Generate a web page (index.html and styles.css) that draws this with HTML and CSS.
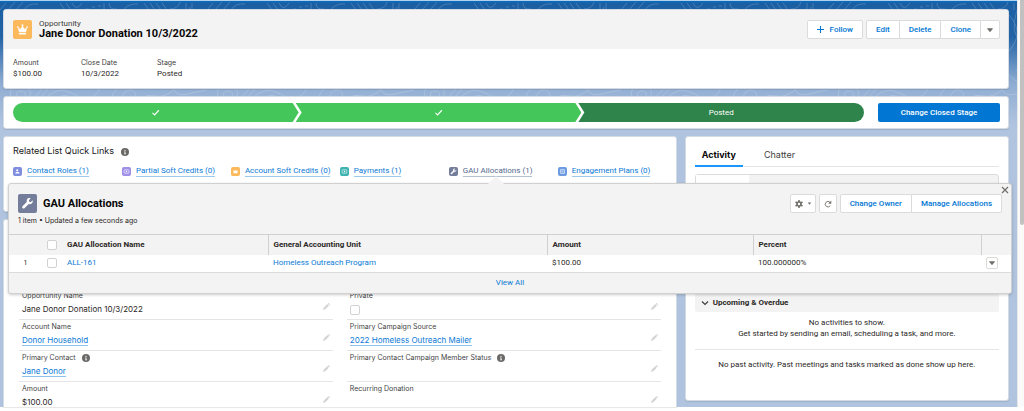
FILE: index.html
```html
<!DOCTYPE html>
<html lang="en">
<head>
    <meta charset="UTF-8">
    <meta name="viewport" content="width=device-width, initial-scale=1.0">
    <title>Jane Donor Donation 10/3/2022</title>
    <link rel="stylesheet" href="styles.css">
</head>
<body>
    <!-- shared icons -->
    <svg class="sprite" aria-hidden="true">
        <symbol id="info" viewBox="0 0 16 16">
            <circle cx="8" cy="8" r="8" fill="#6b6967"/>
            <circle cx="8" cy="4.6" r="1.3" fill="#fff"/>
            <path d="M6.3 7h2.6v4.2h1.2v1.3H6.2v-1.3h1.1V8.3h-1z" fill="#fff"/>
        </symbol>
        <symbol id="pencil" viewBox="0 0 16 16">
            <path d="M0 16l1.500-5L10 2.500l3.500 3.500L5 14.500zM11 1.500l1-1q.8-.7 1.600 0l1.900 1.900q.7.800 0 1.600l-1 1z" fill="#d6d4d2"/>
        </symbol>
        <symbol id="caret" viewBox="0 0 10 10">
            <path d="M.6 2h8.800q.8.300.3 1L5.600 8q-.6.6-1.200 0L.3 3q-.5-.7.3-1z" fill="#706e6b"/>
        </symbol>
        <symbol id="wrench" viewBox="0 0 24 24">
            <path d="M21.500 6.200l-3.300 3.200-3-.6-.6-3 3.200-3.300c-2.600-1-5.400-.2-6.700 2-1 1.600-1 3.200-.4 4.800L3.100 16.800c-1.200 1.200-1.200 2.800-.2 3.900 1.100 1 2.700 1 3.900-.2l7.500-7.600c1.700.6 3.400.5 4.900-.5 2.100-1.400 3.200-3.700 2.300-6.200z" fill="#fff"/>
        </symbol>
        <symbol id="tick" viewBox="0 0 12 12">
            <path d="M2 6.500l2.800 2.700L10.500 3" fill="none" stroke="#fff" stroke-width="1.500"/>
        </symbol>
        <symbol id="bill" viewBox="0 0 12 12">
            <rect x="2" y="3" width="8" height="6" rx="1" fill="none" stroke="#fff"/>
            <circle cx="6" cy="6" r="1.300" fill="#fff"/>
        </symbol>
    </svg>

    <div class="page">
        <main class="app">
            <svg class="topo" aria-hidden="true">
                <defs>
                    <pattern id="contours" width="207" height="130" patternUnits="userSpaceOnUse">
                        <g fill="none" stroke="#fff">
                            <path d="M0 9l6-7M8 9l7-8M16 9l7-8M24 9q4-7 14-6M60 2l5 7M66 2l5 7M72 2q4 9 10 0M86 8h3m3-2h3m3-1h3M104 2v7M109 2q0 7 8 6M124 8q6-6 14-5M144 2l5 7M150 2l5 7M156 2l5 7M162 2l5 7M170 8q8 0 10-7M186 9V2M192 9V2"/>
                            <path d="M12 97q-4-6 1-10h15q5 5 0 10zM17 96q-2-6 4-6t4 6M34 97l9-10M40 97l9-10M46 97q10-10 20-7t14 7M58 97q6-5 14 0M86 97q10 0 14-10M112 97q0-6 6-10M122 97q2-8 8-8t6 8M140 97q8-4 16-2t18-6M174 88q2 8 14 5t19-4"/>
                            <path d="M177 10q22 20 4 40t22 38M190 6q-10 30 6 34t-8 30M207 30q-14 10 0 24"/>
                        </g>
                    </pattern>
                </defs>
                <rect width="100%" height="130" fill="url(#contours)"/>
            </svg>

            <!-- record header -->
            <header class="card record">
                <div class="record-head">
                    <span class="icon-lg icon-orange">
                        <svg viewBox="0 0 24 24"><path d="M3.600 8.500l2 8.500h12.800l2-8.500-4.400 2.500L12 5l-4 6zM5.700 18.500h12.600V21H5.700z" fill="#fff"/><circle cx="12" cy="4" r="1.800" fill="#fff"/><circle cx="3.400" cy="7.500" r="1.600" fill="#fff"/><circle cx="20.600" cy="7.500" r="1.600" fill="#fff"/></svg>
                    </span>
                    <div class="record-title">
                        <p>Opportunity</p>
                        <h1>Jane Donor Donation 10/3/2022</h1>
                    </div>
                    <div class="actions">
                        <button class="btn"><svg class="plus" viewBox="0 0 8 8"><path d="M4 0v8M0 4h8" stroke="#0176d3" stroke-width="1.200"/></svg>Follow</button>
                        <div class="btn-group">
                            <button class="btn">Edit</button>
                            <button class="btn">Delete</button>
                            <button class="btn">Clone</button>
                            <button class="btn btn-more" aria-label="More actions"><svg class="caret"><use href="#caret"/></svg></button>
                        </div>
                    </div>
                </div>
                <dl class="highlights">
                    <div><dt>Amount</dt><dd>$100.00</dd></div>
                    <div><dt>Close Date</dt><dd>10/3/2022</dd></div>
                    <div><dt>Stage</dt><dd>Posted</dd></div>
                </dl>
            </header>

            <!-- sales path -->
            <section class="card path">
                <ol class="stages">
                    <li class="stage"><svg class="tick"><use href="#tick"/></svg></li>
                    <li class="stage"><svg class="tick"><use href="#tick"/></svg></li>
                    <li class="stage stage-current">Posted</li>
                </ol>
                <button class="btn-brand">Change Closed Stage</button>
            </section>

            <div class="columns">
                <div class="main-col">
                    <section class="card quick">
                        <h2>Related List Quick Links <svg class="info"><use href="#info"/></svg></h2>
                        <ul class="quick-links">
                            <li><span class="icon-sm icon-indigo"><svg viewBox="0 0 12 12"><circle cx="5.500" cy="4" r="1.800" fill="#fff"/><path d="M2 9.500q0-3 3.500-3t4.500 3z" fill="#fff"/></svg></span><a href="#">Contact Roles (1)</a></li>
                            <li><span class="icon-sm icon-violet"><svg><use href="#bill"/></svg></span><a href="#">Partial Soft Credits (0)</a></li>
                            <li><span class="icon-sm icon-orange"><svg viewBox="0 0 12 12"><path d="M2.500 3.500l2 1.500L6 3l1.500 2 2-1.500v5.500h-7z" fill="#fff"/></svg></span><a href="#">Account Soft Credits (0)</a></li>
                            <li><span class="icon-sm icon-teal"><svg><use href="#bill"/></svg></span><a href="#">Payments (1)</a></li>
                            <li class="active"><span class="icon-sm icon-slate"><svg><use href="#wrench"/></svg></span><a href="#">GAU Allocations (1)</a></li>
                            <li><span class="icon-sm icon-blue"><svg viewBox="0 0 12 12"><rect x="2.500" y="2.500" width="7" height="7" rx="1" fill="none" stroke="#fff"/><path d="M4 5h4M4 7h4" stroke="#fff"/></svg></span><a href="#">Engagement Plans (0)</a></li>
                        </ul>
                    </section>

                    <section class="card details">
                        <div class="fields">
                            <div class="field">
                                <span class="label">Opportunity Name</span>
                                <span class="value">Jane Donor Donation 10/3/2022</span>
                                <button class="edit" aria-label="Edit Opportunity Name"><svg><use href="#pencil"/></svg></button>
                            </div>
                            <div class="field">
                                <label class="label" for="private">Private</label>
                                <span class="value"><input type="checkbox" id="private"></span>
                                <button class="edit" aria-label="Edit Private"><svg><use href="#pencil"/></svg></button>
                            </div>
                            <div class="field">
                                <span class="label">Account Name</span>
                                <span class="value"><a href="#">Donor Household</a></span>
                                <button class="edit" aria-label="Edit Account Name"><svg><use href="#pencil"/></svg></button>
                            </div>
                            <div class="field">
                                <span class="label">Primary Campaign Source</span>
                                <span class="value"><a href="#">2022 Homeless Outreach Mailer</a></span>
                                <button class="edit" aria-label="Edit Primary Campaign Source"><svg><use href="#pencil"/></svg></button>
                            </div>
                            <div class="field">
                                <span class="label">Primary Contact <svg class="info"><use href="#info"/></svg></span>
                                <span class="value"><a href="#">Jane Donor</a></span>
                                <button class="edit" aria-label="Edit Primary Contact"><svg><use href="#pencil"/></svg></button>
                            </div>
                            <div class="field">
                                <span class="label">Primary Contact Campaign Member Status <svg class="info"><use href="#info"/></svg></span>
                                <span class="value"></span>
                                <button class="edit" aria-label="Edit Member Status"><svg><use href="#pencil"/></svg></button>
                            </div>
                            <div class="field">
                                <span class="label">Amount</span>
                                <span class="value">$100.00</span>
                                <button class="edit" aria-label="Edit Amount"><svg><use href="#pencil"/></svg></button>
                            </div>
                            <div class="field">
                                <span class="label">Recurring Donation</span>
                                <span class="value"></span>
                                <button class="edit" aria-label="Edit Recurring Donation"><svg><use href="#pencil"/></svg></button>
                            </div>
                        </div>
                    </section>
                </div>

                <aside class="card side-col">
                    <nav class="tabs">
                        <a href="#" class="tab tab-active">Activity</a>
                        <a href="#" class="tab">Chatter</a>
                    </nav>
                    <div class="composer"><span></span></div>
                    <h3 class="upcoming"><svg class="chevron" viewBox="0 0 8 8"><path d="M1 2.500l3 3 3-3" fill="none" stroke="#3e3e3c" stroke-width="1.200"/></svg>Upcoming &amp; Overdue</h3>
                    <p class="empty">No activities to show.<br>Get started by sending an email, scheduling a task, and more.</p>
                    <p class="past">No past activity. Past meetings and tasks marked as done show up here.</p>
                </aside>

                <!-- related list hover panel -->
                <section class="popover">
                    <button class="close" aria-label="Close"><svg viewBox="0 0 8 8"><path d="M1 1l6 6M7 1L1 7" stroke="#706e6b" stroke-width="1.200"/></svg></button>
                    <div class="popover-head">
                        <div>
                            <h2><span class="icon-lg icon-slate"><svg><use href="#wrench"/></svg></span>GAU Allocations</h2>
                            <p>1 item • Updated a few seconds ago</p>
                        </div>
                        <div class="actions">
                            <button class="btn btn-icon" aria-label="List settings">
                                <svg class="gear" viewBox="0 0 16 16"><circle cx="8" cy="8" r="4" fill="none" stroke="#706e6b" stroke-width="3"/><path d="M8 0v4M8 12v4M1.100 4l3.400 2M11.500 10l3.400 2M1.100 12l3.400-2M11.500 6l3.400-2" stroke="#706e6b" stroke-width="3"/></svg>
                                <svg class="caret caret-sm"><use href="#caret"/></svg>
                            </button>
                            <button class="btn btn-icon" aria-label="Refresh"><svg class="refresh" viewBox="0 0 16 16"><path d="M12.500 11.500A5.500 5.500 0 1 1 12 4.500" fill="none" stroke="#706e6b" stroke-width="1.800"/><path d="M14.500 1v6.500H8.500z" fill="#706e6b"/></svg></button>
                            <div class="btn-group">
                                <button class="btn">Change Owner</button>
                                <button class="btn">Manage Allocations</button>
                            </div>
                        </div>
                    </div>
                    <table>
                        <thead>
                            <tr>
                                <th class="col-num"></th>
                                <th class="col-check"><input type="checkbox" aria-label="Select all"></th>
                                <th class="col-name">GAU Allocation Name</th>
                                <th class="col-unit">General Accounting Unit</th>
                                <th class="col-amount">Amount</th>
                                <th class="col-percent">Percent</th>
                                <th class="col-menu"></th>
                            </tr>
                        </thead>
                        <tbody>
                            <tr>
                                <td class="col-num">1</td>
                                <td class="col-check"><input type="checkbox" aria-label="Select ALL-161"></td>
                                <td><a href="#">ALL-161</a></td>
                                <td><a href="#">Homeless Outreach Program</a></td>
                                <td>$100.00</td>
                                <td>100.000000%</td>
                                <td class="col-menu"><button class="row-menu" aria-label="Show actions"><svg class="caret"><use href="#caret"/></svg></button></td>
                            </tr>
                        </tbody>
                    </table>
                    <a href="#" class="view-all">View All</a>
                </section>
            </div>
        </main>
        <div class="scrollbar"><span></span></div>
    </div>
</body>
</html>
```

FILE: styles.css
```css
* {
    margin: 0;
    padding: 0;
    box-sizing: border-box;
}
body {
    font: 8px/12px Roboto, "Liberation Sans", sans-serif;
    color: #2b2826;
    background: #fff;
}
a {
    color: #0b7ad6;
    text-decoration: none;
}
button {
    font: inherit;
    background: none;
    border: 0;
}
svg {
    display: block;
}
ul,
ol {
    list-style: none;
}
input[type="checkbox"] {
    appearance: none;
    display: block;
    width: 10px;
    height: 10px;
    border: 1px solid #d4d2d0;
    border-radius: 2px;
    background: #fff;
}
.sprite {
    position: absolute;
    width: 0;
    height: 0;
}

/* frame */
.page {
    display: flex;
    padding-bottom: 4px;
}
.app {
    position: relative;
    flex: 1;
    min-width: 0;
    padding: 8px 8px 0 3px;
    border-top: 1px solid #b5d0ea;
    background: linear-gradient(#0a6bbd 0, #0a6bbd 1px, #1b5fa3 2px, #2464a6 36px, #8eacd2 82px, #b0c4df 124px);
}
.topo {
    position: absolute;
    top: 0;
    left: 0;
    width: 100%;
    height: 130px;
    opacity: 0.18;
}
.scrollbar {
    width: 7px;
    padding-left: 2px;
    background: #fafafa;
    border-left: 1px solid #e8e8e8;
}
.scrollbar span {
    display: block;
    height: 225px;
    border-radius: 0 0 3px 3px;
    background: #c1c1c1;
}
.card {
    position: relative;
    background: #fff;
    border: 1px solid #d5dbe4;
    border-radius: 3px;
    box-shadow: 0 1px 1px rgba(0, 0, 0, 0.1);
}

/* icons */
.icon-lg {
    width: 19px;
    height: 19px;
    padding: 3px;
    border-radius: 2px;
}
.icon-lg svg {
    width: 13px;
    height: 13px;
}
.icon-sm {
    width: 9px;
    height: 9px;
    border-radius: 2px;
}
.icon-sm svg {
    width: 9px;
    height: 9px;
    padding: 1px;
}
.icon-orange { background: #fcb95b; }
.icon-indigo { background: #7f8de1; }
.icon-violet { background: #9f8fe8; }
.icon-teal { background: #3cb3b0; }
.icon-slate { background: #747e9b; }
.icon-blue { background: #6b9ae2; }
.info {
    display: inline-block;
    width: 8px;
    height: 8px;
    margin-left: 4px;
    vertical-align: -2px;
}
.caret {
    width: 6px;
    height: 6px;
}
.caret-sm {
    width: 3px;
    height: 3px;
}

/* buttons */
.actions {
    display: flex;
    gap: 3px;
    margin-left: auto;
}
.btn-group {
    display: flex;
}
.btn {
    display: flex;
    align-items: center;
    height: 19px;
    padding: 0 9px;
    color: #0176d3;
    background: #fff;
    border: 1px solid #dddbda;
    border-radius: 2px;
    font-weight: 500;
}
.btn-group .btn + .btn {
    margin-left: -1px;
}
.btn-group .btn:not(:last-child) {
    border-top-right-radius: 0;
    border-bottom-right-radius: 0;
}
.btn-group .btn:not(:first-child) {
    border-top-left-radius: 0;
    border-bottom-left-radius: 0;
}
.btn-more {
    padding: 0 6px;
}
.btn-icon {
    gap: 5px;
    padding: 0 4px;
}
.plus {
    width: 7px;
    height: 7px;
    margin-right: 6px;
}
.gear {
    width: 8px;
    height: 8px;
}
.refresh {
    width: 8px;
    height: 8px;
}

/* record header */
.record-head {
    display: flex;
    align-items: flex-start;
    height: 39px;
    padding: 10px 8px 10px 9px;
    background: #f3f3f3;
    border-radius: 2px 2px 0 0;
}
.record-title {
    margin-left: 7px;
    color: #080707;
}
.record-title p {
    line-height: 8px;
    color: #3e3e3c;
}
.record-title h1 {
    font-size: 11px;
    line-height: 12px;
}
.highlights {
    display: flex;
    gap: 38px;
    padding: 8px 9px 9px;
}
.highlights dt {
    font: 7px/11px Inter, sans-serif;
    color: #3e3e3c;
}
.highlights div:first-child {
    min-width: 30px;
}
.highlights dd {
    line-height: 11px;
}

/* path */
.path {
    display: flex;
    gap: 14px;
    margin-top: 7px;
    padding: 6px 8px 6px 9px;
}
.stages {
    display: flex;
    flex: 1;
    height: 19px;
    border-radius: 10px;
    overflow: hidden;
}
.stage {
    display: flex;
    flex: 1;
    align-items: center;
    justify-content: center;
    margin-right: -3px;
    color: #fff;
    background: #45c65a;
    clip-path: polygon(0 0, calc(100% - 6px) 0, 100% 50%, calc(100% - 6px) 100%, 0 100%, 6px 50%);
}
.stage:first-child {
    clip-path: polygon(0 0, calc(100% - 6px) 0, 100% 50%, calc(100% - 6px) 100%, 0 100%);
}
.stage-current {
    margin-right: 0;
    background: #2e844a;
    clip-path: polygon(0 0, 100% 0, 100% 100%, 0 100%, 6px 50%);
}
.tick {
    width: 9px;
    height: 9px;
}
.btn-brand {
    width: 122px;
    height: 19px;
    color: #fff;
    background: #0176d3;
    border-radius: 2px;
    font-weight: 500;
}

/* columns */
.columns {
    position: relative;
    display: grid;
    grid-template-columns: minmax(0, 27fr) minmax(0, 13fr);
    align-items: start;
    gap: 8px;
    margin-top: 7px;
}
.side-col {
    min-height: 265px;
    padding: 8px 9px;
}
.quick {
    height: 76px;
    padding: 7px 9px;
}
.quick h2 {
    font: 9px/13px Inter, sans-serif;
    color: #181818;
}
.quick-links {
    display: grid;
    grid-template-columns: repeat(6, 1fr);
    margin-top: 8px;
}
.quick-links li {
    display: flex;
    align-items: center;
    gap: 5px;
    white-space: nowrap;
}
.quick-links a {
    line-height: 11px;
    border-bottom: 1px solid #9cc9f0;
}
.quick-links .active a {
    color: #54698d;
    border-color: #b4bfd0;
}

/* details */
.details {
    height: 188px;
    margin-top: 7px;
    padding: 69px 15px 0;
    border-bottom: 0;
    border-radius: 3px 3px 0 0;
    overflow: hidden;
    font-family: Inter, "Liberation Sans", sans-serif;
}
.fields {
    display: grid;
    grid-template-columns: 1fr 1fr;
    column-gap: 14px;
}
.field {
    display: grid;
    grid-template-columns: 1fr auto;
    grid-template-rows: 14px 16px;
    padding: 0 3px;
    border-bottom: 1px solid #e5e5e5;
}
.label {
    grid-column: 1 / 3;
    font-size: 7px;
    line-height: 14px;
    color: #444;
}
.value {
    line-height: 12px;
}
.value a {
    border-bottom: 1px solid #8fc2ef;
}
.value input {
    margin-top: 2px;
}
.edit svg {
    width: 7px;
    height: 7px;
}
.edit {
    align-self: start;
}

/* activity */
.tabs {
    display: flex;
    gap: 7px;
    border-bottom: 1px solid #e5e5e5;
    font: 9px/20px Inter, sans-serif;
}
.tab {
    padding: 0 14px;
    margin-bottom: -1px;
    color: #3e3e3c;
}
.tab-active {
    padding: 0 7px;
    color: #080707;
    font-weight: 700;
    border-bottom: 2px solid #1b96ff;
}
.composer {
    height: 113px;
    margin-top: 7px;
    background: #f3f3f3;
    border: 1px solid #dddbda;
    border-radius: 3px;
}
.composer span {
    display: block;
    width: 53px;
    height: 20px;
    background: #fff;
}
.upcoming {
    display: flex;
    align-items: center;
    gap: 4px;
    height: 18px;
    margin-top: 7px;
    padding: 0 6px;
    background: #f3f3f3;
    border-radius: 2px;
    font-size: 8px;
}
.chevron {
    width: 8px;
    height: 8px;
}
.empty {
    padding: 5px 0 10px;
    line-height: 11px;
    text-align: center;
    border-bottom: 1px solid #e5e5e5;
}
.past {
    padding-top: 9px;
    text-align: center;
}

/* hover panel */
.popover {
    position: absolute;
    top: 47px;
    left: 5px;
    right: -3px;
    background: #f3f3f3;
    border: 1px solid #d0d0d0;
    border-radius: 3px;
    box-shadow: 0 1px 3px rgba(0, 0, 0, 0.2);
}
.popover::before {
    content: "";
    position: absolute;
    top: -8px;
    left: 479px;
    border: 8px solid transparent;
    border-top: 0;
    border-bottom-color: #f3f3f3;
}
.close {
    position: absolute;
    top: 2px;
    right: 2px;
}
.close svg {
    width: 8px;
    height: 8px;
}
.popover-head {
    display: flex;
    align-items: flex-start;
    padding: 10px 9px 7px;
}
.popover-head h2 {
    display: flex;
    align-items: center;
    gap: 6px;
    font-size: 11px;
    color: #080707;
}
.popover-head p {
    margin-top: 2px;
    font: 7px/12px Inter, sans-serif;
}
table {
    width: 100%;
    table-layout: fixed;
    border-collapse: collapse;
    border-top: 1px solid #d0d0d0;
}
th {
    height: 20px;
    padding-left: 5px;
    text-align: left;
    border-right: 1px solid #d0d0d0;
}
th.col-num,
th.col-check,
th.col-menu {
    border-right: 0;
}
td {
    height: 18px;
    padding-left: 5px;
    background: #fff;
    border-bottom: 1px solid #dddbda;
}
.col-num {
    width: 33px;
    padding: 0;
    text-align: center;
    font-size: 7px;
}
.col-check { width: 20px; }
.col-name { width: 206px; }
.col-unit { width: 279px; }
.col-amount { width: 206px; }
.col-menu { width: 30px; }
.row-menu {
    padding: 2px;
    background: #fff;
    border: 1px solid #dddbda;
    border-radius: 2px;
}
.view-all {
    display: block;
    line-height: 20px;
    text-align: center;
}
```
